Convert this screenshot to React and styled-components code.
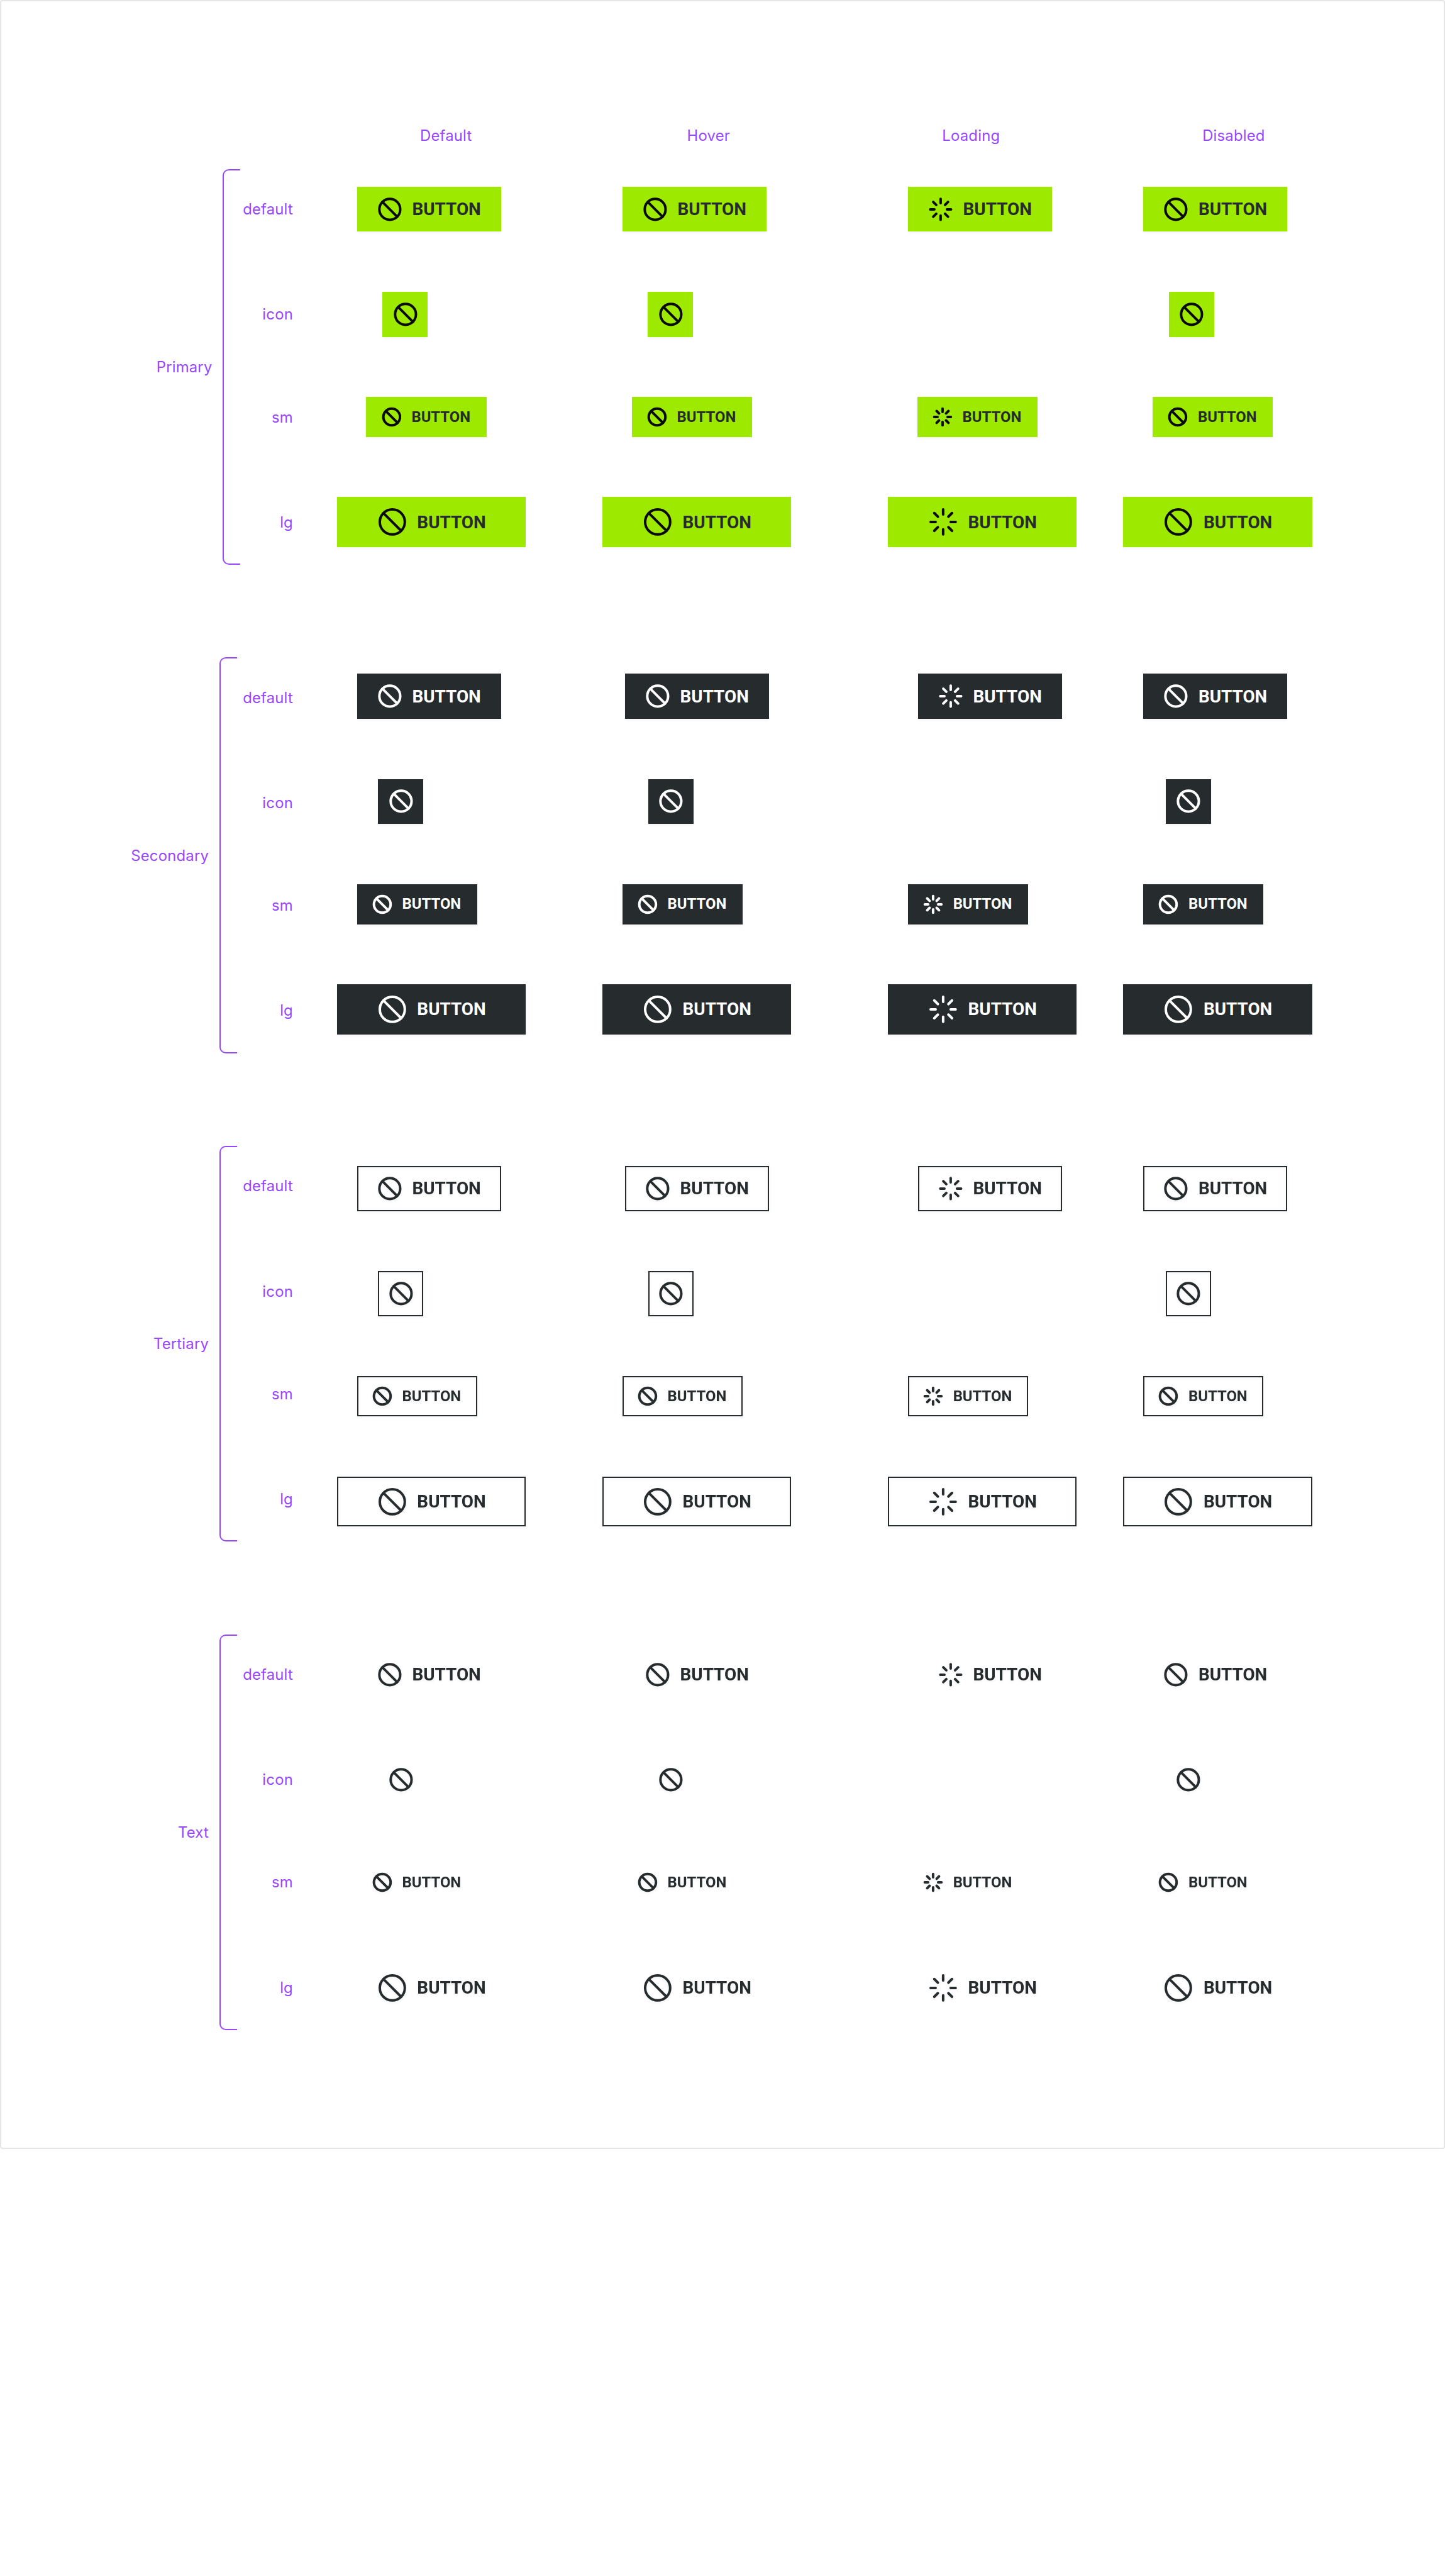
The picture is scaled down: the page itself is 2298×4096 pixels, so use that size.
import React from "react";
import styled, { createGlobalStyle, css } from "styled-components";
import { Ban, Loader } from "lucide-react";

const SCALE = 0.99565;
const u = (n) => `${+(n * SCALE).toFixed(3)}px`;

const COLORS = {
  purple: "#9747ff",
  lime: "#9de900",
  ink: "#262b2d",
  black: "#0a0a0a",
  white: "#ffffff",
  frame: "#e5e5e5",
};

const GlobalStyle = createGlobalStyle`
  *, *::before, *::after { box-sizing: border-box; }
  html, body { margin: 0; padding: 0; background: ${COLORS.white}; }
`;

const Page = styled.div`
  width: 100%;
  min-height: ${u(4114)};
  background: ${COLORS.white};
`;

const Frame = styled.main`
  display: flex;
  flex-direction: column;
  width: 100%;
  height: ${u(3432)};
  padding-top: ${u(197.4)};
  border: 2px solid ${COLORS.frame};
  border-radius: 4px;
`;

const Label = styled.span`
  padding-top: 1px;
  font-family: Inter, "Liberation Sans", sans-serif;
  font-size: ${u(24)};
  font-weight: 400;
  line-height: ${u(32)};
  letter-spacing: 0.008em;
  color: ${COLORS.purple};
  white-space: nowrap;
`;

const Header = styled.header`
  display: grid;
  grid-template-columns: repeat(4, ${u(419.4)});
  height: ${u(32)};
  margin-left: ${u(500.6)};
  margin-bottom: ${u(38.6)};
  justify-items: center;
`;

const Groups = styled.div`
  display: flex;
  flex-direction: column;
  gap: ${u(148)};
`;

const Group = styled.section`
  display: flex;
  height: ${u(632)};
`;

const GroupName = styled.div`
  display: flex;
  align-items: center;
  justify-content: flex-end;
  width: ${(p) => u(p.$end - 2)};
`;

const Bracket = styled.div`
  flex: none;
  width: ${u(28)};
  margin-left: ${u(17)};
  border: 2px solid ${COLORS.purple};
  border-right: none;
  border-radius: 10px 0 0 10px;
`;

const SizeNames = styled.div`
  flex: none;
  display: flex;
  flex-direction: column;
  gap: ${u(96)};
  width: ${(p) => u(p.$width)};
  padding-top: ${u(28)};
`;

const SizeName = styled.div`
  display: flex;
  align-items: center;
  justify-content: flex-end;
  height: ${(p) => u(p.$height)};
`;

const Samples = styled.div`
  display: grid;
  grid-template-columns: ${u(424)} ${u(456)} ${u(376)} ${u(302)};
  margin-left: ${u(70)};
  padding-top: ${(p) => u(p.$top)};
`;

const Column = styled.div`
  display: flex;
  flex-direction: column;
  gap: ${u(96)};
`;

const Slot = styled.div`
  display: flex;
  height: ${(p) => u(p.$height)};
  padding-left: ${(p) => u(p.$inset)};
`;

const variants = {
  primary: css`
    background: ${COLORS.lime};
    color: ${COLORS.ink};
    box-shadow: 0 2px 4px rgba(0, 0, 0, 0.05);
    svg { color: ${COLORS.black}; }
  `,
  secondary: css`
    background: ${COLORS.ink};
    color: ${COLORS.white};
    box-shadow: 0 2px 4px rgba(0, 0, 0, 0.05);
  `,
  tertiary: css`
    background: transparent;
    color: ${COLORS.ink};
    box-shadow: inset 0 0 0 2px ${COLORS.ink};
    filter: drop-shadow(0 2px 2px rgba(0, 0, 0, 0.05));
  `,
  text: css`
    background: transparent;
    color: ${COLORS.ink};
    filter: drop-shadow(0 2px 2px rgba(0, 0, 0, 0.05));
  `,
};

const SIZES = {
  default: { width: 230, height: 72, pad: 32, icon: 40, font: 28 },
  icon: { width: 72, height: 72, pad: 16, icon: 40, font: 28 },
  sm: { width: 192, height: 64, pad: 24, icon: 32, font: 24 },
  lg: { width: 302, height: 80, pad: 64, icon: 48, font: 28 },
};

const Button = styled.button`
  display: flex;
  align-items: center;
  gap: ${u(16)};
  width: ${(p) => u(SIZES[p.$size].width)};
  height: 100%;
  padding: 0 0 0 ${(p) => u(SIZES[p.$size].pad + 0.3)};
  border: none;
  border-radius: 0;
  font-family: Roboto, "Liberation Sans", sans-serif;
  font-size: ${(p) => u(SIZES[p.$size].font)};
  font-weight: 700;
  line-height: ${u(40)};
  white-space: nowrap;
  svg { flex: none; display: block; }
  ${(p) => variants[p.$variant]}
`;

const Caption = styled.span`
  padding-top: 0.8px;
`;

const STATES = ["Default", "Hover", "Loading", "Disabled"];
const SIZE_NAMES = ["default", "icon", "sm", "lg"];

const shared = {
  default: [32, 36, 48, 32],
  icon: [66, 73.7, null, 68],
  sm: [32, 32, 32, 32],
  lg: [0, 0, 0, 0],
};

const GROUPS = [
  {
    name: "Primary",
    variant: "primary",
    nameEnd: 339,
    top: 28,
    insets: {
      default: [32, 32, 32, 32],
      icon: [73, 73, null, 73],
      sm: [47, 47, 47, 47],
      lg: [0, 0, 0, 0],
    },
  },
  { name: "Secondary", variant: "secondary", nameEnd: 333.5, top: 26, insets: shared },
  { name: "Tertiary", variant: "tertiary", nameEnd: 333.5, top: 32, insets: shared },
  { name: "Text", variant: "text", nameEnd: 333.5, top: 28.4, insets: shared },
];

function ButtonSample({ variant, size, loading }) {
  const Icon = loading ? Loader : Ban;
  const side = SIZES[size].icon;
  return (
    <Button type="button" $variant={variant} $size={size}>
      <Icon size={side * SCALE} strokeWidth={(4 * 24) / side} />
      {size !== "icon" && <Caption>BUTTON</Caption>}
    </Button>
  );
}

function ButtonGroup({ group }) {
  return (
    <Group>
      <GroupName $end={group.nameEnd}>
        <Label>{group.name}</Label>
      </GroupName>
      <Bracket />
      <SizeNames $width={468 - (group.nameEnd + 45)}>
        {SIZE_NAMES.map((size) => (
          <SizeName key={size} $height={SIZES[size].height}>
            <Label>{size}</Label>
          </SizeName>
        ))}
      </SizeNames>
      <Samples $top={group.top}>
        {STATES.map((state, col) => (
          <Column key={state}>
            {SIZE_NAMES.map((size) => {
              const inset = group.insets[size][col];
              return (
                <Slot key={size} $height={SIZES[size].height} $inset={inset ?? 0}>
                  {inset !== null && (
                    <ButtonSample variant={group.variant} size={size} loading={state === "Loading"} />
                  )}
                </Slot>
              );
            })}
          </Column>
        ))}
      </Samples>
    </Group>
  );
}

export default function App() {
  return (
    <Page>
      <GlobalStyle />
      <Frame>
        <Header>
          {STATES.map((state) => (
            <Label key={state}>{state}</Label>
          ))}
        </Header>
        <Groups>
          {GROUPS.map((group) => (
            <ButtonGroup key={group.name} group={group} />
          ))}
        </Groups>
      </Frame>
    </Page>
  );
}
